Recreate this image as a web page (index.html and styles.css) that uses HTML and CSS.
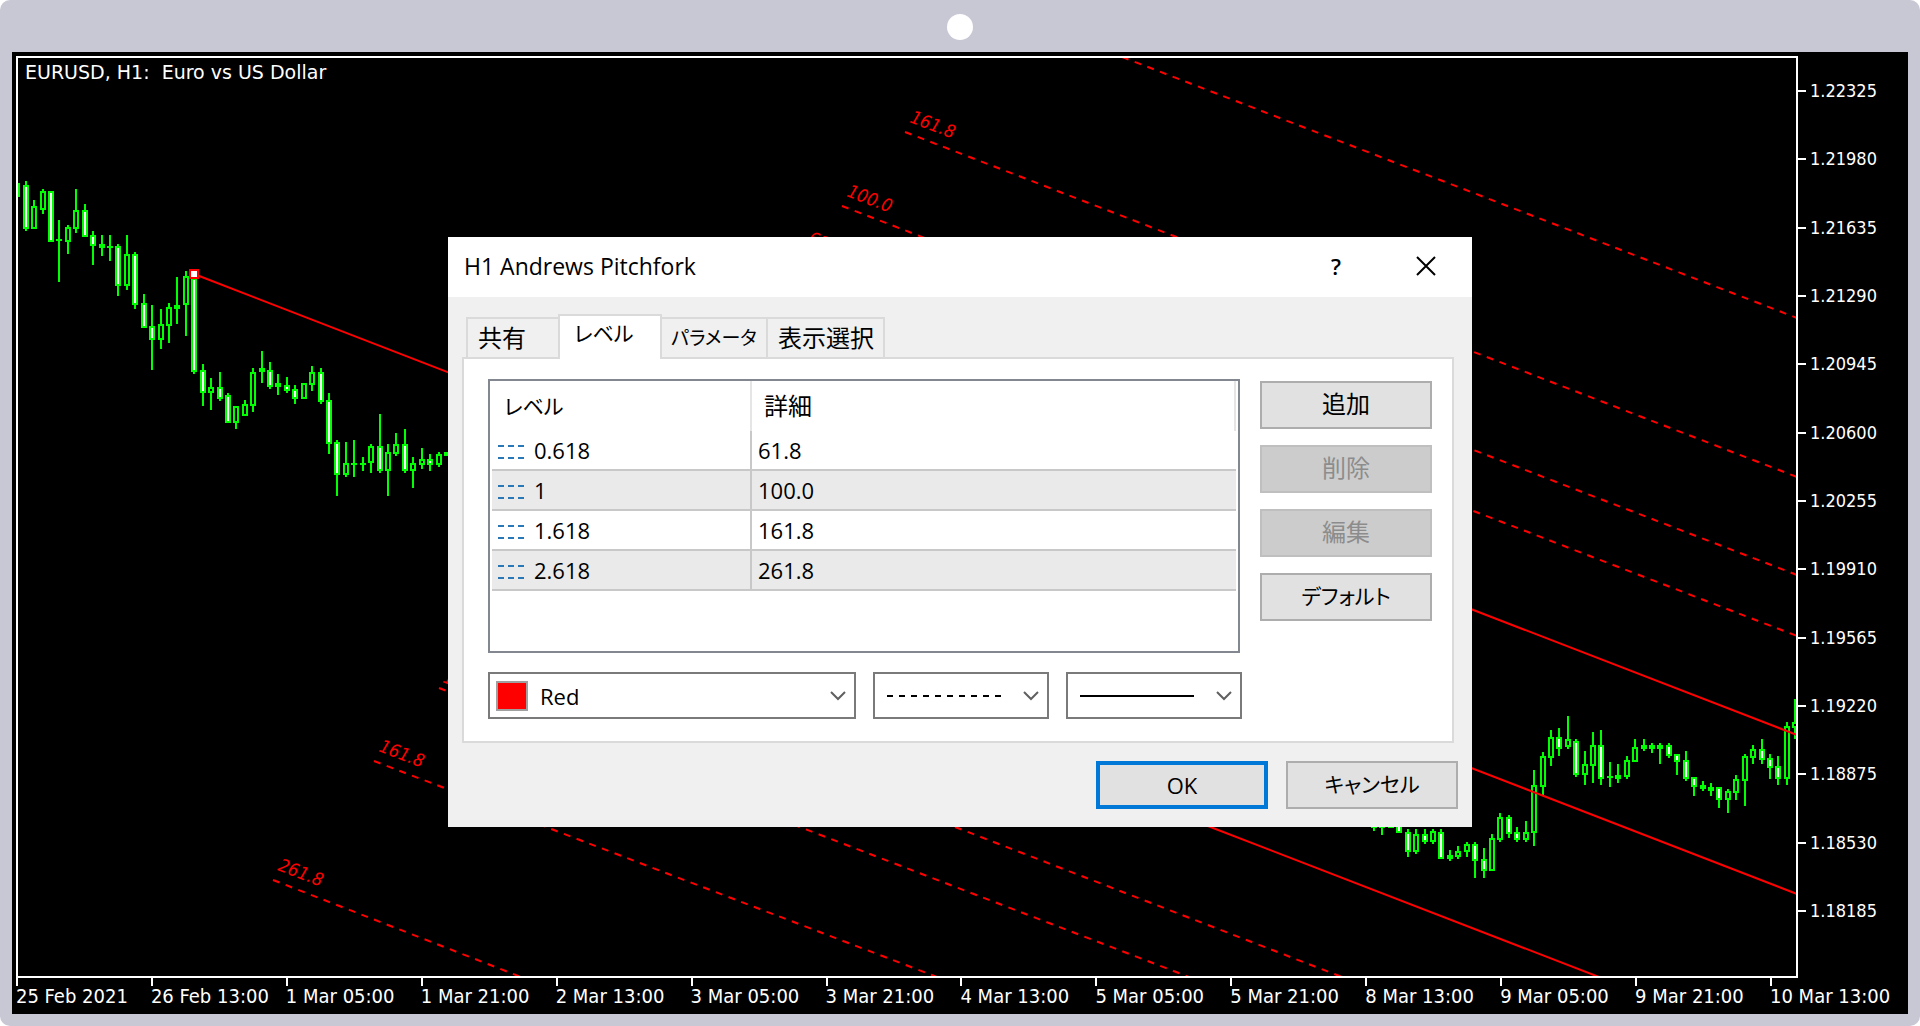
FILE: index.html
```html
<!DOCTYPE html>
<html lang="ja">
<head>
<meta charset="utf-8">
<meta name="viewport" content="width=device-width, initial-scale=1">
<title>EURUSD, H1</title>
<link rel="stylesheet" href="styles.css">
</head>
<body>
<div class="device">
  <div class="bezel"><span class="camera"></span></div>
  <main class="screen">
    <section class="chart">
      <div class="plot">
        <h1 class="symbol">EURUSD, H1:&nbsp; Euro vs US Dollar</h1>
        <svg class="series" viewBox="0 0 1778 918" preserveAspectRatio="none" aria-hidden="true">
          <g id="candles" shape-rendering="crispEdges"></g>
          <g class="fork" transform="translate(-18 -58)">
            <path d="M194 274L1797 894M1300 543L1797 735M1200 823L1599 977"/>
            <g class="levels">
              <path d="M1122 57L1797 318"/>
              <path d="M905 132L1797 477"/>
              <path d="M842 206L1797 575"/>
              <path d="M803 252L1797 636"/>
              <path d="M955 827L1342 977"/>
              <path d="M439 688L1189 977"/>
              <path d="M374 761L937 977"/>
              <path d="M273 880L521 977"/>
            </g>
            <g class="tags">
              <text transform="translate(909 122) rotate(21)">161.8</text>
              <text transform="translate(846 196) rotate(21)">100.0</text>
              <text transform="translate(807 243) rotate(21)">61.8</text>
              <text transform="translate(442 682) rotate(21)">100.0</text>
              <text transform="translate(378 751) rotate(21)">161.8</text>
              <text transform="translate(277 870) rotate(21)">261.8</text>
            </g>
            <rect class="anchor" x="190" y="270" width="8" height="8"/>
          </g>
        </svg>
      </div>
      <ol class="prices">
        <li>1.22325</li><li>1.21980</li><li>1.21635</li><li>1.21290</li><li>1.20945</li><li>1.20600</li><li>1.20255</li><li>1.19910</li><li>1.19565</li><li>1.19220</li><li>1.18875</li><li>1.18530</li><li>1.18185</li>
      </ol>
      <ol class="times">
        <li>25 Feb 2021</li><li>26 Feb 13:00</li><li>1 Mar 05:00</li><li>1 Mar 21:00</li><li>2 Mar 13:00</li><li>3 Mar 05:00</li><li>3 Mar 21:00</li><li>4 Mar 13:00</li><li>5 Mar 05:00</li><li>5 Mar 21:00</li><li>8 Mar 13:00</li><li>9 Mar 05:00</li><li>9 Mar 21:00</li><li>10 Mar 13:00</li>
      </ol>
    </section>

    <div class="overlay">
      <form class="dialog" role="dialog" aria-labelledby="dialog-title">
        <header class="titlebar">
          <h2 id="dialog-title">H1 Andrews Pitchfork</h2>
          <button type="button" class="caption help">?</button>
          <button type="button" class="caption" aria-label="閉じる">
            <svg width="20" height="20" viewBox="0 0 20 20"><path d="M1 1L19 19M19 1L1 19" stroke="#000" stroke-width="2"/></svg>
          </button>
        </header>
        <div class="body">
          <div class="tabs" role="tablist">
            <button type="button" role="tab" class="tab">共有</button>
            <button type="button" role="tab" class="tab selected kana" aria-selected="true">レベル</button>
            <button type="button" role="tab" class="tab kana long">パラメータ</button>
            <button type="button" role="tab" class="tab">表示選択</button>
          </div>
          <div class="panel" role="tabpanel">
            <div class="upper">
              <div class="list">
                <table>
                  <thead><tr><th class="kana">レベル</th><th>詳細</th></tr></thead>
                  <tbody>
                    <tr><td><svg class="dashes" viewBox="0 0 26 14"><path d="M0 1h26M0 13h26"/></svg>0.618</td><td>61.8</td></tr>
                    <tr><td><svg class="dashes" viewBox="0 0 26 14"><path d="M0 1h26M0 13h26"/></svg>1</td><td>100.0</td></tr>
                    <tr><td><svg class="dashes" viewBox="0 0 26 14"><path d="M0 1h26M0 13h26"/></svg>1.618</td><td>161.8</td></tr>
                    <tr><td><svg class="dashes" viewBox="0 0 26 14"><path d="M0 1h26M0 13h26"/></svg>2.618</td><td>261.8</td></tr>
                  </tbody>
                </table>
              </div>
              <div class="actions">
                <button type="button" class="push">追加</button>
                <button type="button" class="push" disabled>削除</button>
                <button type="button" class="push" disabled>編集</button>
                <button type="button" class="push kana">デフォルト</button>
              </div>
            </div>
            <div class="combos">
              <div class="combo">
                <select class="with-swatch" aria-label="色"><option>Red</option></select>
                <span class="swatch"></span>
                <svg class="chevron" viewBox="0 0 16 10"><path d="M1 1L8 8L15 1"/></svg>
              </div>
              <div class="combo">
                <select aria-label="線の種類"><option value="dash"></option></select>
                <svg class="sample" viewBox="0 0 114 4"><path d="M0 2h114" stroke-dasharray="6 6"/></svg>
                <svg class="chevron" viewBox="0 0 16 10"><path d="M1 1L8 8L15 1"/></svg>
              </div>
              <div class="combo">
                <select aria-label="線の太さ"><option value="1"></option></select>
                <svg class="sample" viewBox="0 0 114 4"><path d="M0 2h114"/></svg>
                <svg class="chevron" viewBox="0 0 16 10"><path d="M1 1L8 8L15 1"/></svg>
              </div>
            </div>
          </div>
          <footer class="footer">
            <button type="submit" class="push default">OK</button>
            <button type="button" class="push kana">キャンセル</button>
          </footer>
        </div>
      </form>
    </div>
  </main>
</div>
<script src="chart.js"></script>
</body>
</html>
```
FILE: styles.css
```css
* { box-sizing: border-box; }
body {
  margin: 0;
  background: #fff;
  color: #000;
  font: 22px/28px "Open Sans", "Noto Sans CJK JP", sans-serif;
}
h1, h2, ol { margin: 0; padding: 0; font-weight: 400; }
button, select { font: inherit; color: inherit; border-radius: 0; }

.device {
  display: flex;
  flex-direction: column;
  min-height: 100vh;
  padding: 0 12px 12px;
  border-radius: 10px;
  background: #c8c7d4;
}
.bezel {
  display: flex;
  justify-content: center;
  height: 52px;
  padding-top: 14px;
}
.camera { width: 26px; height: 26px; border-radius: 50%; background: #fff; }
.screen {
  position: relative;
  display: grid;
  flex: 1;
  background: #000;
}

/* chart */
.chart {
  display: grid;
  grid-template: minmax(0, 1fr) 36px / minmax(0, 1fr) 110px;
  padding: 4px 0 0 4px;
  color: #fff;
  font: 18px/20px "DejaVu Sans Condensed", "DejaVu Sans", sans-serif;
}
.plot {
  display: grid;
  border: 2px solid #fff;
  overflow: hidden;
}
.symbol, .series { grid-area: 1 / 1; }
.symbol { padding: 4px 7px; font-family: "DejaVu Sans", sans-serif; font-size: 19px; }
.series { width: 100%; height: 100%; }
.fork { fill: none; stroke: #f00; stroke-width: 2; }
.levels { stroke-dasharray: 7 6.56; }
.tags { fill: #f00; stroke: none; font-size: 18px; font-style: italic; }
.anchor { fill: #fff; }
.prices {
  display: flex;
  flex-direction: column;
  justify-content: space-between;
  padding: 25px 0 57px;
  list-style: none;
}
.prices li { display: flex; align-items: center; gap: 4px; }
.prices li::before { content: ""; width: 8px; height: 2px; background: #fff; }
.times {
  display: grid;
  grid-column: 1 / -1;
  grid-template-columns: repeat(13, minmax(0, 1fr)) 138px;
  list-style: none;
  white-space: nowrap;
  font-size: 20px;
}
.times li::before {
  content: "";
  display: block;
  width: 2px;
  height: 8px;
  background: #fff;
}
.times li { text-indent: -2px; }

/* dialog */
.overlay {
  position: absolute;
  inset: 0;
  display: grid;
  place-items: center;
  padding-bottom: 2px;
}
.dialog {
  width: 1024px;
  max-width: 100%;
  background: #f0f0f0;
}
.titlebar {
  display: flex;
  align-items: center;
  height: 60px;
  padding: 0 0 2px 16px;
  background: #fff;
}
.titlebar h2 { flex: 1; font-size: 23px; }
.caption {
  display: grid;
  place-items: center;
  width: 92px;
  height: 58px;
  padding: 0;
  border: 0;
  background: none;
}
.help { width: 88px; font-weight: 600; }
.body { padding: 17px 14px 18px; }
.tabs { display: flex; align-items: flex-end; padding-left: 4px; }
.tab {
  height: 40px;
  padding: 0 10px;
  border: 2px solid #dadada;
  border-width: 2px 2px 0 0;
  background: #f0f0f0;
  font-size: 24px;
  white-space: nowrap;
}
.tab:first-child { width: 92px; border-width: 2px 0 0 2px; text-align: left; }
.tab:nth-child(3) { width: 106px; padding: 0 7px; }
.tab:nth-child(4) { width: 117px; }
.tab.selected {
  position: relative;
  width: 104px;
  height: 45px;
  margin-bottom: -2px;
  padding: 0 14px 10px;
  border-left-width: 2px;
  background: #fff;
  text-align: left;
}
.tab.kana, .push.kana, th.kana { font-feature-settings: "palt"; font-size: 21px; }
.tab.long { font-size: 19px; }
.panel {
  margin-right: 4px;
  padding: 20px 20px 22px 24px;
  border: 2px solid #dadada;
  background: #fff;
}
.upper { display: flex; gap: 20px; }
.list {
  flex: 1;
  min-height: 274px;
  padding: 0 2px;
  border: 2px solid #828790;
}
.list table { width: 100%; border-collapse: separate; border-spacing: 0; table-layout: fixed; }
th, td { padding: 0; text-align: left; font-weight: 400; }
th {
  height: 50px;
  padding: 0 12px;
  border-right: 2px solid #e5e5e5;
  font-size: 24px;
  line-height: 48px;
}
th:first-child { width: 260px; }
td { height: 40px; padding-left: 6px; border-bottom: 2px solid #c8c8c8; }
td:first-child { border-right: 2px solid #c8c8c8; }
tbody tr:nth-child(even) { background: #eaeaea; }
.dashes {
  width: 26px;
  height: 14px;
  margin-right: 10px;
  stroke: #2878b8;
  stroke-width: 2;
  stroke-dasharray: 6 4;
}
.actions { display: flex; flex-direction: column; gap: 16px; padding-top: 2px; }
.push {
  width: 172px;
  height: 48px;
  padding: 0 0 2px;
  border: 2px solid #adadad;
  background: #e1e1e1;
  font-size: 24px;
}
.push:disabled { border-color: #bfbfbf; background: #ccc; color: #8c8c8c; }
.push.default { padding: 0; border: 4px solid #0078d7; font-size: 22px; }
.combos {
  display: grid;
  grid-template-columns: 368px 176px 176px;
  gap: 17px;
  margin-top: 19px;
}
.combo { display: grid; align-items: center; }
.combo > * { grid-area: 1 / 1; }
.combo select {
  width: 100%;
  height: 47px;
  padding: 0 12px;
  border: 2px solid #7a7a7a;
  background: #fff;
  appearance: none;
}
.combo .with-swatch { padding-left: 50px; }
.swatch {
  width: 32px;
  height: 30px;
  margin-left: 8px;
  border: 2px solid #a0a0a0;
  background: #f00;
  pointer-events: none;
}
.chevron {
  justify-self: end;
  width: 16px;
  height: 10px;
  margin-right: 10px;
  fill: none;
  stroke: #606060;
  stroke-width: 2;
  pointer-events: none;
}
.sample {
  width: 114px;
  height: 4px;
  margin-left: 14px;
  stroke: #000;
  stroke-width: 2;
  pointer-events: none;
}
.footer { display: flex; justify-content: flex-end; gap: 18px; margin-top: 18px; }
```
FILE: chart.js
```js
// Candles: [high, body top, body bottom, low, kind], measured downwards in
// thirds of a pixel. Kinds: w = falling, b = rising, g = closed where it opened.
const STEP = 8.425;
const runs = [
  { x: 17.3, base: 0, bars: [
    [548,548,592,592,'g'],[542,555,687,692,'w'],[599,619,687,687,'b'],[568,573,629,642,'b'],[573,573,725,725,'w'],
    [661,718,724,845,'g'],[675,681,725,762,'b'],[567,631,687,698,'b'],[612,631,712,712,'w'],[693,706,737,795,'w'],
    [706,732,743,769,'g'],[706,738,744,782,'g'],[732,738,858,888,'w'],[706,763,858,869,'b'],[757,763,914,927,'w'],
    [883,908,984,984,'w'],[914,978,1021,1109,'w'],[928,971,1021,1047,'b'],[909,921,977,1028,'b'],[832,915,926,971,'g'],
    [813,827,914,1009,'b'],[820,835,1116,1121,'w'],[1092,1110,1179,1217,'w'],[1135,1161,1179,1230,'b'],[1117,1161,1198,1204,'w'],
    [1179,1186,1268,1268,'w'],[1218,1218,1268,1286,'b'],[1199,1213,1249,1249,'b'],[1104,1117,1217,1236,'b'],[1053,1104,1116,1148,'g'],
    [1085,1111,1161,1166,'w'],[1123,1149,1160,1186,'g'],[1130,1155,1173,1179,'w'],[1155,1168,1198,1211,'w'],[1149,1149,1198,1198,'b'],
    [1098,1117,1154,1173,'b'],[1104,1117,1205,1211,'w'],[1180,1199,1332,1362,'w'],[1320,1326,1425,1489,'w'],[1326,1389,1425,1431,'b'],
    [1319,1388,1394,1431,'g'],[1370,1388,1394,1413,'g'],[1332,1339,1388,1418,'b'],[1243,1339,1413,1418,'w'],[1332,1357,1413,1489,'b'],
    [1300,1332,1362,1369,'b'],[1288,1332,1413,1418,'w'],[1370,1389,1413,1463,'b'],[1344,1377,1394,1407,'b'],[1363,1377,1394,1413,'w'],
    [1357,1363,1394,1400,'b'],[1357,1357,1368,1368,'g']
  ] },
  { x: 1374, base: 1980, bars: [
    [480,480,505,512,'g'],[480,480,505,525,'g'],[480,480,505,505,'g'],[480,480,520,520,'w'],[508,515,577,590,'w'],
    [508,521,577,583,'b'],[508,521,546,552,'w'],[508,514,546,552,'b'],[508,515,597,597,'w'],[571,585,597,602,'g'],
    [558,572,591,597,'b'],[546,552,577,591,'b'],[546,552,602,653,'w'],[564,597,634,653,'w'],[521,534,633,633,'b'],
    [458,471,540,545,'b'],[464,471,521,533,'w'],[502,516,540,545,'w'],[483,516,540,545,'b'],[331,376,520,558,'b'],
    [276,289,380,407,'b'],[211,230,293,318,'b'],[205,230,267,287,'w'],[167,237,262,267,'b'],[237,243,344,350,'w'],
    [274,312,344,375,'b'],[217,255,318,369,'b'],[211,255,356,375,'w'],[306,349,355,382,'g'],[312,346,356,369,'g'],
    [287,299,350,356,'b'],[237,262,305,305,'b'],[236,255,267,274,'g'],[249,255,267,280,'g'],[249,255,267,312,'g'],
    [249,255,287,293,'w'],[281,281,305,344,'w'],[274,299,356,362,'w'],[350,350,381,407,'w'],[363,376,388,394,'g'],
    [369,382,392,407,'g'],[382,382,419,445,'w'],[388,394,419,458,'b'],[344,357,400,419,'b'],[281,287,362,438,'b'],
    [255,268,293,312,'b'],[236,268,299,312,'w'],[281,293,325,356,'w'],[287,318,357,375,'w'],[185,198,356,375,'b'],
    [116,186,205,236,'b']
  ] }
];

const layer = document.getElementById('candles');
function rect(x, y, width, height, fill) {
  const node = document.createElementNS('http://www.w3.org/2000/svg', 'rect');
  Object.entries({ x, y, width, height, fill }).forEach(([k, v]) => node.setAttribute(k, v));
  layer.append(node);
}
runs.forEach(({ x, base, bars }) => bars.forEach(([high, top, bottom, low, kind], i) => {
  const cx = Math.round(x + i * STEP) - 18;
  const [h, t, b, l] = [high, top, bottom, low].map(v => Math.round((v + base) / 3) - 58);
  rect(cx - 1, h, 2, l - h, '#0f0');
  rect(cx - 3, t, 6, Math.max(b - t, 2), '#0f0');
  if (kind !== 'g') rect(cx - 1, t + 2, 2, Math.max(b - t - 4, 1), kind === 'w' ? '#fff' : '#000');
}));
```
